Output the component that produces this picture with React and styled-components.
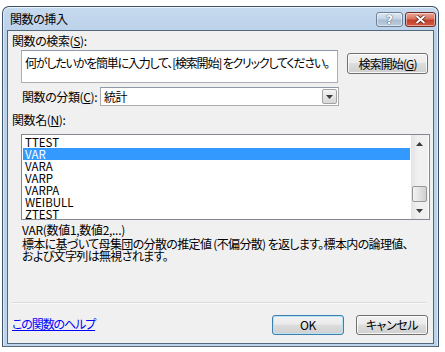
import React from 'react'
import styled, { createGlobalStyle } from 'styled-components'

const GlobalStyle = createGlobalStyle`
    body{
        margin: 0;
        background: #ffffff;
        font-family: "Noto Sans CJK JP", "Noto Sans", sans-serif;
        font-size: 12px;
        font-feature-settings: "palt" 1;
        letter-spacing: -0.4px;
        color: #000;
    }
`;

const Page = styled.div`
    padding: 6px 0 0 2px;
`;

const Window = styled.div`
    box-sizing: border-box;
    width: 437px;
    height: 341px;
    display: flex;
    flex-direction: column;
    border: 1px solid #3d5168;
    border-bottom-color: #5a6a7c;
    border-radius: 7px 7px 0 0;
    background: linear-gradient(#c6daef, #b9d0e8 30px, #bcd3ea);
    box-shadow: inset 0 1px 0 rgba(255,255,255,.7), inset 1px 0 0 rgba(255,255,255,.5), inset -1px 0 0 rgba(255,255,255,.5);
`;

const TitleBar = styled.div`
    height: 23px;
    display: flex;
    align-items: flex-start;
    padding: 5px 2px 0 7px;
    box-sizing: border-box;
`;

const Title = styled.div`
    flex: 1;
    line-height: 14px;
    color: #000;
`;

const CaptionGroup = styled.div`
    display: flex;
    gap: 2px;
`;

const CaptionButton = styled.div`
    width: ${p => p.$w}px;
    height: 15px;
    box-sizing: border-box;
    border: 1px solid ${p => p.$close ? '#6e2c22' : '#6f8196'};
    border-radius: 3px;
    display: flex;
    align-items: center;
    justify-content: center;
    background: ${p => p.$close
        ? 'linear-gradient(#e9a999, #d9735e 45%, #c2402a 55%, #d45a43)'
        : 'linear-gradient(#dce7f2, #c3d3e5 45%, #aabdd2 55%, #bccde0)'};
    box-shadow: inset 0 0 0 1px rgba(255,255,255,.45);
    color: #fff;
    font-family: "DejaVu Sans", sans-serif;
    font-weight: bold;
    font-size: 12px;
    line-height: 12px;
    letter-spacing: 0;
    text-shadow: 0 0 1px #3a4a5a, 0 0 1px #3a4a5a;
`;

const Client = styled.div`
    flex: 1;
    margin: 0 4px 2px 4px;
    border: 1px solid #53677d;
    background: #f0f0f0;
    display: flex;
    flex-direction: column;
    padding: 3px 5px 8px 4px;
`;

const Label = styled.div`
    line-height: 14px;
    width: ${p => p.$w ? `${p.$w}px` : 'auto'};
    margin-top: ${p => p.$top || 0}px;
    white-space: nowrap;
`;

const Row = styled.div`
    display: flex;
    align-items: ${p => p.$align || 'center'};
    margin-top: ${p => p.$top || 0}px;
    margin-left: ${p => p.$indent || 0}px;
`;

const SearchBox = styled.div`
    width: 318px;
    height: 33px;
    box-sizing: border-box;
    background: #fff;
    border: 1px solid #abadb3;
    border-top-color: #8e9aa8;
    padding: 5px 3px;
    line-height: 14px;
    letter-spacing: -1.2px;
    white-space: nowrap;
    overflow: hidden;
`;

const Button = styled.div`
    width: ${p => p.$w}px;
    height: ${p => p.$h || 20}px;
    box-sizing: border-box;
    border: 1px solid ${p => p.$default ? '#3c7fb1' : '#707070'};
    border-radius: 3px;
    background: linear-gradient(#f2f2f2, #ebebeb 45%, #dddddd 50%, #cfcfcf);
    box-shadow: inset 0 0 0 1px ${p => p.$default ? '#b9e2f5' : 'rgba(255,255,255,.8)'};
    display: flex;
    align-items: center;
    justify-content: center;
    line-height: 14px;
    letter-spacing: ${p => p.$tight ? '-0.9px' : '-0.4px'};
    margin-left: ${p => p.$left || 0}px;
    margin-top: ${p => p.$top || 0}px;
    white-space: nowrap;
`;

const Select = styled.div`
    width: 239px;
    height: 19px;
    box-sizing: border-box;
    background: #fff;
    border: 1px solid #abadb3;
    border-top-color: #8e9aa8;
    display: flex;
    align-items: center;
    padding: 0 1px 0 3px;
`;

const SelectValue = styled.div`
    flex: 1;
    line-height: 14px;
`;

const DropButton = styled.div`
    width: 15px;
    height: 15px;
    box-sizing: border-box;
    border: 1px solid #a2a2a2;
    border-radius: 2px;
    background: linear-gradient(#f6f6f6, #e6e6e6 50%, #d6d6d6);
    display: flex;
    align-items: center;
    justify-content: center;
`;

const ListBox = styled.div`
    width: 409px;
    height: 86px;
    box-sizing: border-box;
    margin-left: 9px;
    margin-top: 7px;
    background: #fff;
    border: 1px solid #828790;
    display: flex;
    padding: 1px 1px 0 1px;
    overflow: hidden;
`;

const Items = styled.div`
    flex: 1;
`;

const Item = styled.div`
    height: 12px;
    line-height: 12px;
    font-size: 11.5px;
    letter-spacing: 0;
    padding-left: 2px;
    margin-right: 1px;
    background: ${p => p.$selected ? '#3399ff' : 'transparent'};
    color: ${p => p.$selected ? '#fff' : '#000'};
`;

const ScrollBar = styled.div`
    width: 17px;
    display: flex;
    flex-direction: column;
    background: linear-gradient(90deg, #e3e3e3, #f0f0f0 40%, #f0f0f0);
    margin-top: -1px;
`;

const ScrollArrow = styled.div`
    height: 17px;
    display: flex;
    align-items: center;
    justify-content: center;
`;

const ScrollTrack = styled.div`
    flex: 1;
    display: flex;
    flex-direction: column;
    justify-content: flex-end;
    align-items: center;
`;

const Thumb = styled.div`
    width: 15px;
    height: 16px;
    box-sizing: border-box;
    border: 1px solid #979797;
    border-radius: 2px;
    background: linear-gradient(90deg, #f2f2f2, #e2e2e2 50%, #d0d0d0);
`;

const Description = styled.div`
    margin-left: 10px;
    margin-top: 4px;
    line-height: 12px;
    letter-spacing: -0.65px;
`;

const Syntax = styled.div`
    line-height: 12px;
    letter-spacing: -0.3px;
    margin-bottom: 2px;
`;

const Separator = styled.div`
    margin-top: auto;
    height: 1px;
    background: #dadada;
    border-bottom: 1px solid #fafafa;
    margin-right: 2px;
`;

const Footer = styled.div`
    display: flex;
    align-items: center;
    margin-top: 11px;
`;

const HelpLink = styled.a`
    flex: 1;
    color: #0000ff;
    text-decoration: underline;
    line-height: 14px;
    letter-spacing: -1.1px;
    margin-top: -2px;
`;

const Arrow = ({ up }) => (
    <svg width="7" height="4" viewBox="0 0 7 4">
        <path d={up ? 'M0 4 L3.5 0 L7 4 Z' : 'M0 0 L7 0 L3.5 4 Z'} fill="#3c3c3c" />
    </svg>
)

const functions = ['TTEST', 'VAR', 'VARA', 'VARP', 'VARPA', 'WEIBULL', 'ZTEST']

function App() {
    return (
        <Page>
            <GlobalStyle />
            <Window>
                <TitleBar>
                    <Title>関数の挿入</Title>
                    <CaptionGroup>
                        <CaptionButton $w={27}>?</CaptionButton>
                        <CaptionButton $w={31} $close>
                            <svg width="11" height="9" viewBox="0 0 11 9">
                                <path d="M1.5 1 L9.5 8 M9.5 1 L1.5 8" stroke="#4a1a12" strokeWidth="3.4" />
                                <path d="M1.5 1 L9.5 8 M9.5 1 L1.5 8" stroke="#fff" strokeWidth="2" />
                            </svg>
                        </CaptionButton>
                    </CaptionGroup>
                </TitleBar>
                <Client>
                    <Label>関数の検索(<u>S</u>):</Label>
                    <Row $align="flex-start" $top={2} $indent={9}>
                        <SearchBox>何がしたいかを簡単に入力して、[検索開始] をクリックしてください。</SearchBox>
                        <Button $w={81} $h={21} $left={9} $top={3} $tight>検索開始(<u>G</u>)</Button>
                    </Row>
                    <Row $top={4} $indent={10}>
                        <Label $w={78}>関数の分類(<u>C</u>):</Label>
                        <Select>
                            <SelectValue>統計</SelectValue>
                            <DropButton><Arrow /></DropButton>
                        </Select>
                    </Row>
                    <Label $top={7}>関数名(<u>N</u>):</Label>
                    <ListBox>
                        <Items>
                            {functions.map((name) => (
                                <Item key={name} $selected={name === 'VAR'}>{name}</Item>
                            ))}
                        </Items>
                        <ScrollBar>
                            <ScrollArrow><Arrow up /></ScrollArrow>
                            <ScrollTrack><Thumb /></ScrollTrack>
                            <ScrollArrow><Arrow /></ScrollArrow>
                        </ScrollBar>
                    </ListBox>
                    <Description>
                        <Syntax>VAR(数値1,数値2,...)</Syntax>
                        標本に基づいて母集団の分散の推定値 (不偏分散) を返します。標本内の論理値、<br />
                        および文字列は無視されます。
                    </Description>
                    <Separator />
                    <Footer>
                        <HelpLink href="#">この関数のヘルプ</HelpLink>
                        <Button $w={72} $default>OK</Button>
                        <Button $w={72} $left={12}>キャンセル</Button>
                    </Footer>
                </Client>
            </Window>
        </Page>
    )
}

export default App
